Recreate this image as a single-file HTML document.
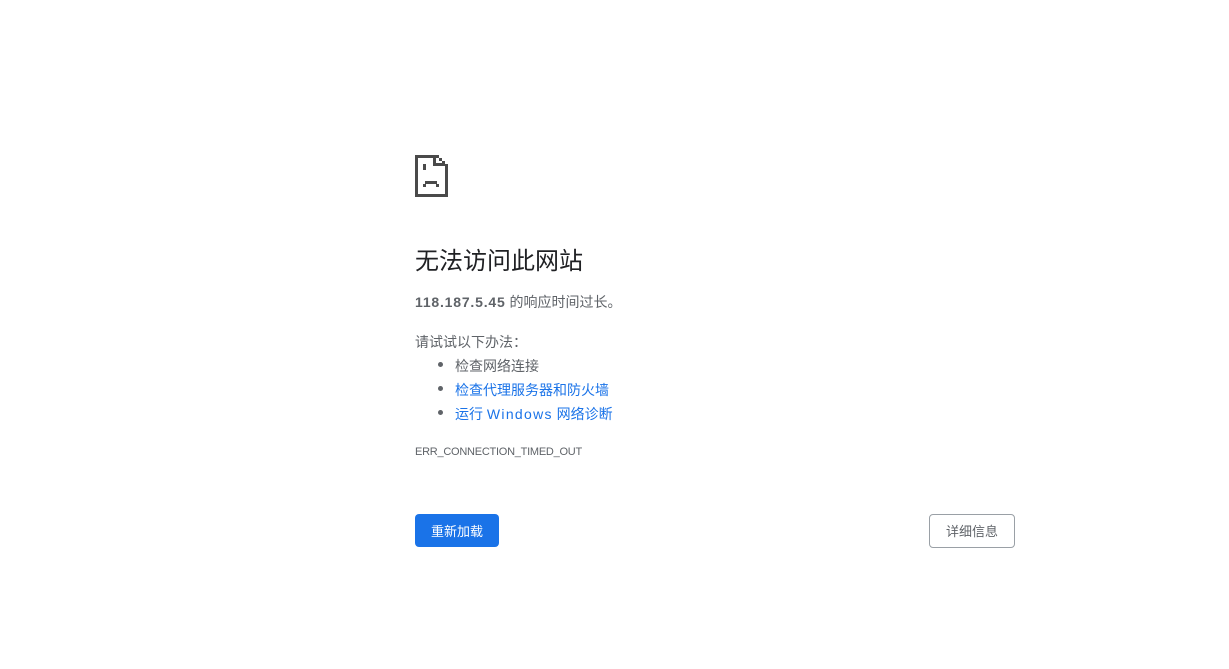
<!DOCTYPE html>
<html><head><meta charset="utf-8"><style>
body{margin:0;background:#fff;width:1229px;height:669px;position:relative;font-family:"Liberation Sans","Noto Sans CJK SC",sans-serif;color:#5f6368;}
.a{position:absolute;white-space:nowrap;}
h1{position:absolute;left:415px;top:245px;margin:0;font-size:24px;font-weight:normal;color:#202124;line-height:34px;}
.t{font-size:14px;line-height:20px;}
a{color:#1a73e8;text-decoration:none;}
.dot{position:absolute;width:5px;height:5px;border-radius:50%;background:#5f6368;}
.b1{position:absolute;left:415px;top:514px;width:84px;height:33px;background:#1a73e8;border-radius:4px;color:#fff;font-size:13px;line-height:35px;text-align:center;}
.b2{position:absolute;left:929px;top:514px;width:84px;height:32px;border:1px solid #9aa0a6;border-radius:4px;color:#5f6368;font-size:13px;line-height:34px;text-align:center;}
</style></head><body>
<svg class="a" style="left:0;top:0" width="1229" height="669">
<g fill="#4a4a4a">
<rect x="415" y="155" width="3" height="42"/>
<rect x="415" y="194" width="33" height="3"/>
<rect x="445" y="164" width="3" height="33"/>
<rect x="415" y="155" width="24" height="3"/>
<rect x="439" y="158" width="3" height="3"/>
<rect x="442" y="161" width="3" height="3"/>
<rect x="433" y="155" width="3" height="11"/>
<rect x="433" y="163" width="12" height="3"/>
<rect x="423" y="164" width="3" height="6"/>
<rect x="425" y="181" width="12" height="3"/>
<rect x="423" y="184" width="3" height="3"/>
<rect x="436" y="184" width="3" height="3"/>
</g></svg>
<h1>无法访问此网站</h1>
<div class="a t" style="left:415px;top:292px"><b style="letter-spacing:0.8px">118.187.5.45</b> 的响应时间过长。</div>
<div class="a t" style="left:415px;top:332px">请试试以下办法：</div>
<div class="dot" style="left:438px;top:362px"></div>
<div class="dot" style="left:438px;top:386px"></div>
<div class="dot" style="left:438px;top:410px"></div>
<div class="a t" style="left:455px;top:356px">检查网络连接</div>
<div class="a t" style="left:455px;top:380px"><a>检查代理服务器和防火墙</a></div>
<div class="a t" style="left:455px;top:404px"><a>运行 <span style="letter-spacing:1.3px">Windows</span> 网络诊断</a></div>
<div class="a" style="left:415px;top:445px;font-size:11px;line-height:15px;letter-spacing:-0.25px">ERR_CONNECTION_TIMED_OUT</div>
<div class="b1">重新加载</div>
<div class="b2">详细信息</div>
</body></html>
